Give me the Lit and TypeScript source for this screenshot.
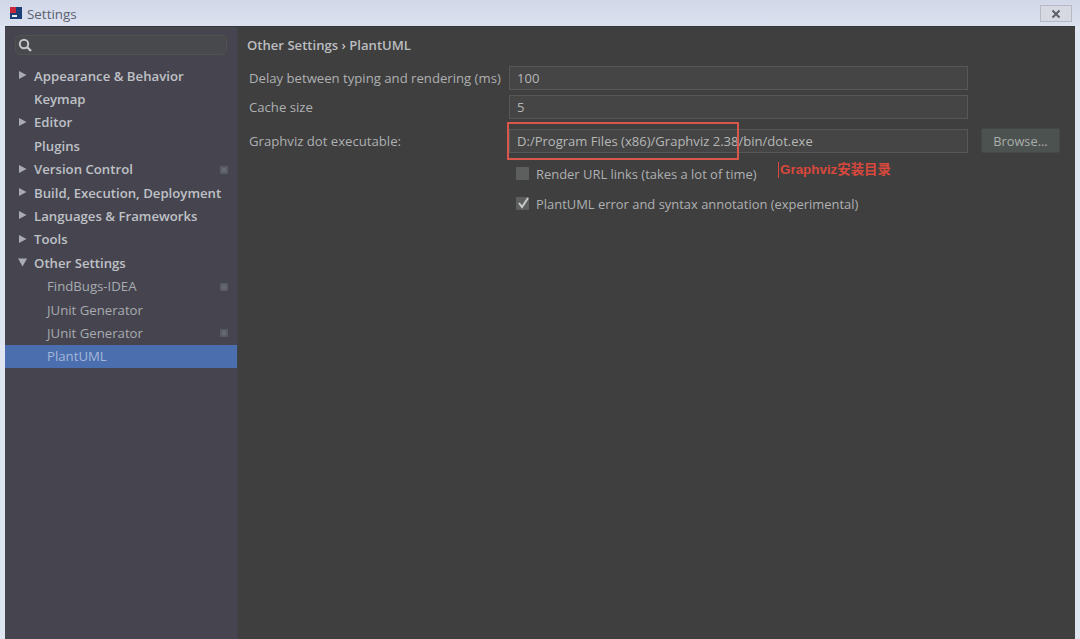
import { LitElement, html, css, svg } from "lit";
import { customElement } from "lit/decorators.js";

type Row = { t: string; arrow?: "r" | "d"; child?: boolean; badge?: boolean; sel?: boolean };
const rows: Row[] = [
  { t: "Appearance & Behavior", arrow: "r" },
  { t: "Keymap" },
  { t: "Editor", arrow: "r" },
  { t: "Plugins" },
  { t: "Version Control", arrow: "r", badge: true },
  { t: "Build, Execution, Deployment", arrow: "r" },
  { t: "Languages & Frameworks", arrow: "r" },
  { t: "Tools", arrow: "r" },
  { t: "Other Settings", arrow: "d" },
  { t: "FindBugs-IDEA", child: true, badge: true },
  { t: "JUnit Generator", child: true },
  { t: "JUnit Generator", child: true, badge: true },
  { t: "PlantUML", child: true, sel: true },
];

@customElement("app-root")
export class AppRoot extends LitElement {
  static styles = css`
    :host { display: block; width: 1080px; height: 639px; overflow: hidden; font-family: "Open Sans", "Liberation Sans", sans-serif; font-size: 13px; background: #dfe6f1; }
    .window { height: 639px; display: flex; flex-direction: column; }
    .title { height: 26px; flex: none; display: flex; align-items: center; padding: 2px 0 0 9px; gap: 4px; background: linear-gradient(#d3d8e9, #dce1f0); color: #5a606c; font-size: 13.4px; box-sizing: border-box; }
    .logo { width: 14px; height: 14px; flex: none; margin-top: -2px; }
    .close { margin-left: auto; margin-right: 8px; margin-top: -1px; width: 32px; height: 17px; display: flex; align-items: center; justify-content: center; background: #d6d9e2; border: 1px solid #b6bac6; box-sizing: border-box; }
    .body { flex: 1; display: flex; margin: 0 5px 0 5px; border-top: 1px solid #33383a; min-height: 0; }
    .side { width: 233px; flex: none; background: #46454f; border-right: 1px solid #3d4248; box-sizing: border-box; display: flex; flex-direction: column; }
    .search { height: 37px; display: flex; align-items: flex-start; padding: 8px 10px 0 11px; box-sizing: border-box; }
    .sbox { flex: 1; height: 20px; background: #47494c; border: 1px solid #4f524f; border-radius: 5px; display: flex; align-items: center; padding-left: 1px; margin-left: -1px; box-sizing: border-box; }
    .tree { display: flex; flex-direction: column; }
    .row { height: 23.4px; display: flex; align-items: center; position: relative; color: #bfc1c6; font-weight: 600; font-size: 13.2px; padding-left: 29px; white-space: nowrap; box-sizing: border-box; }
    .row.child { padding-left: 42px; font-weight: 400; color: #a8abaf; }
    .row.sel { background: #4b6eaf; color: #a3b7d8; }
    .arrow { position: absolute; left: 13px; top: 6px; width: 9px; height: 10px; }
    .badge { position: absolute; right: 8px; top: 7px; width: 10px; height: 10px; }
    .main { flex: 1; background: #3f3f3f; padding: 10px 16px 0 9px; min-width: 0; position: relative; }
    .crumb { font-weight: 600; color: #bcbec0; font-size: 13.1px; height: 17px; line-height: 17px; margin-bottom: 12px; }
    .form { display: grid; grid-template-columns: 260px 459px 1fr; align-items: center; row-gap: 5px; color: #aeb0b2; margin-left: 2px; }
    .label { font-size: 13.15px; white-space: nowrap; }
    .input { height: 24px; box-sizing: border-box; background: #454545; border: 1px solid #565856; color: #b6b8b7; padding-left: 7px; display: flex; align-items: center; font-size: 13.05px; white-space: nowrap; }
    .third { margin-top: 5px; }
    .btn { margin-left: 13px; margin-top: 4px; width: 79px; height: 25px; box-sizing: border-box; background: #4c5250; border: 1px solid #454847; border-radius: 2px; display: flex; align-items: center; justify-content: center; color: #aaaeac; font-size: 12.8px; }
    .checks { margin: 11px 0 0 269px; display: flex; flex-direction: column; gap: 11px; }
    .check { display: flex; align-items: center; gap: 7px; height: 19px; color: #aeb0b2; font-size: 12.95px; white-space: nowrap; }
    .cb { width: 13px; height: 13px; background: #5d5e5e; border-radius: 1px; flex: none; position: relative; display: flex; }
    .cb svg { position: absolute; left: 0; top: -2px; }
    .mark { position: absolute; left: 269px; top: 95px; width: 232px; height: 38px; box-sizing: border-box; border: 2px solid #d8564c; pointer-events: none; }
    .note { position: absolute; left: 540px; top: 135px; padding-left: 1px; border-left: 1px solid #d9483c; color: #d9483c; font-size: 13.4px; line-height: 16px; font-weight: 600; white-space: nowrap; font-family: "Liberation Sans", "Noto Sans CJK SC", sans-serif; }
  `;

  arrow(k: "r" | "d") {
    return html`<svg class="arrow" viewBox="0 0 9 10">${k === "r"
      ? svg`<path d="M1 1 L8.5 5 L1 9 Z" fill="#a9acb2"/>`
      : svg`<path d="M0 1.5 L9 1.5 L4.5 9.5 Z" fill="#a9acb2"/>`}</svg>`;
  }

  render() {
    return html`<div class="window">
      <div class="title">
        <svg class="logo" viewBox="0 0 14 14"><rect x="1" y="1" width="12" height="12" fill="#1c3f78"/><rect x="1" y="1" width="6" height="6" fill="#c8283a"/><rect x="3" y="9" width="5" height="2" fill="#eee"/></svg>
        <span>Settings</span>
        <div class="close"><svg width="12" height="10" viewBox="0 0 12 10"><path d="M2.5 1.5 L9.5 8.5 M9.5 1.5 L2.5 8.5" stroke="#5b6068" stroke-width="2" fill="none"/></svg></div>
      </div>
      <div class="body">
        <div class="side">
          <div class="search"><div class="sbox"><svg width="16" height="16" viewBox="0 0 16 16"><circle cx="7" cy="7" r="4.2" fill="none" stroke="#c4c6c8" stroke-width="2"/><path d="M10 10 L14 14" stroke="#c4c6c8" stroke-width="2.4"/></svg></div></div>
          <div class="tree">
            ${rows.map((r) => html`<div class="row ${r.child ? "child" : ""} ${r.sel ? "sel" : ""}">
              ${r.arrow ? this.arrow(r.arrow) : ""}
              <span>${r.t}</span>
              ${r.badge ? html`<svg class="badge" viewBox="0 0 10 10"><rect x="1" y="1" width="8" height="8" rx="1" fill="#5a5c64"/><path d="M3 4h4M3 6h4" stroke="#74767e"/></svg>` : ""}
            </div>`)}
          </div>
        </div>
        <div class="main">
          <div class="crumb">Other Settings › PlantUML</div>
          <div class="form">
            <div class="label">Delay between typing and rendering (ms)</div>
            <div class="input">100</div>
            <div></div>
            <div class="label">Cache size</div>
            <div class="input">5</div>
            <div></div>
            <div class="label third">Graphviz dot executable:</div>
            <div class="input third">D:/Program Files (x86)/Graphviz 2.38/bin/dot.exe</div>
            <div class="btn">Browse...</div>
          </div>
          <div class="checks">
            <div class="check"><span class="cb"></span>Render URL links (takes a lot of time)</div>
            <div class="check"><span class="cb"><svg width="15" height="15" viewBox="0 0 15 15"><path d="M3 8 L6 12 L12 3" fill="none" stroke="#c8cacc" stroke-width="2"/></svg></span>PlantUML error and syntax annotation (experimental)</div>
          </div>
          <div class="mark"></div>
          <div class="note">Graphviz安装目录</div>
        </div>
      </div>
    </div>`;
  }
}
